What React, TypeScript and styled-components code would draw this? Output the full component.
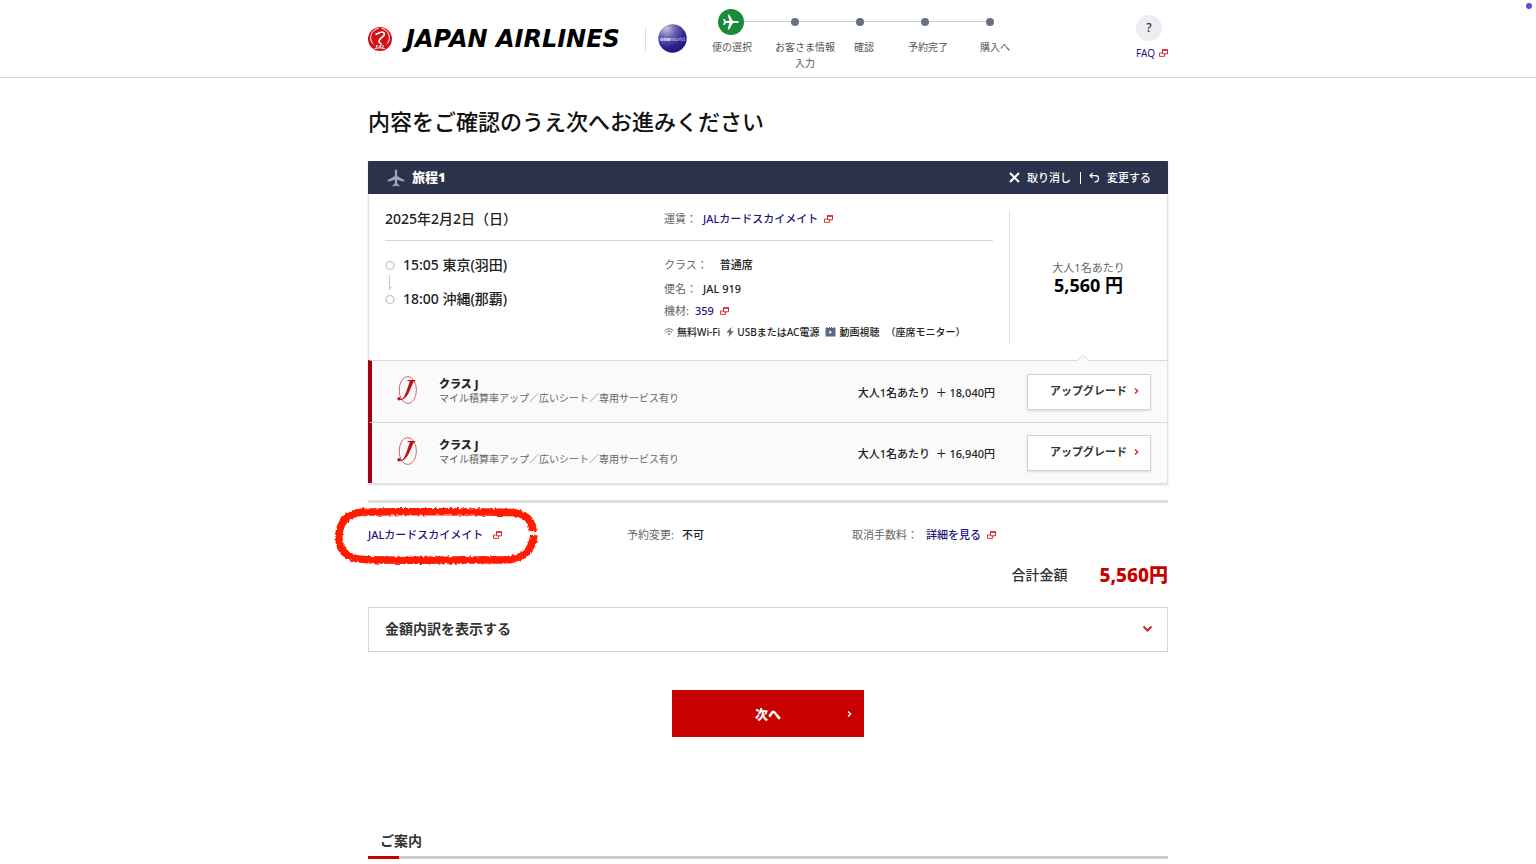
import React from "react";
import styled, { createGlobalStyle } from "styled-components";

const GlobalStyle = createGlobalStyle`
  *, *::before, *::after { box-sizing: border-box; }
  body {
    margin: 0;
    background: #fff;
    color: #222;
    font-family: "Noto Sans", "Noto Sans CJK JP", sans-serif;
    font-size: 11px;
    line-height: 20px;
  }
  h1, h2, h3, p, ol, ul, dl, dd { margin: 0; padding: 0; }
  ol { list-style: none; }
  button { font: inherit; color: inherit; cursor: pointer; padding: 0; border: 0; background: none; }
  a { color: #1e1580; text-decoration: none; }
  svg { display: block; flex: none; }
`;

const Wrap = styled.div`
  width: 100%;
  max-width: 800px;
  margin: 0 auto;
`;

const RecordingDot = styled.span`
  position: absolute;
  top: 3px;
  right: 4px;
  width: 6px;
  height: 6px;
  border-radius: 50%;
  background: #5a4be0;
`;

const Header = styled.header`
  border-bottom: 1px solid #d8d8d8;
`;

const HeaderInner = styled(Wrap)`
  display: flex;
  align-items: flex-start;
  height: 77px;
`;

const Brand = styled.a`
  display: flex;
  align-items: center;
  padding-top: 24px;
  color: #000;
`;

const BrandName = styled.span`
  width: 227px;
  margin: 0 12px 0 14px;
  font: italic 700 24px/28px "DejaVu Sans", sans-serif;
  white-space: nowrap;
`;

const BrandRule = styled.span`
  width: 1px;
  height: 24px;
  margin-right: 12px;
  background: #ddd;
`;

const Progress = styled.div`
  width: 320px;
  margin-left: 24px;
  padding-top: 8px;
`;

const StepTrack = styled.div`
  display: flex;
  align-items: center;
  padding-left: 7px;
  height: 27px;
`;

const StepLine = styled.span`
  width: 57px;
  height: 1px;
  background: #ccc;
  &:first-of-type { width: 47px; }
`;

const StepDot = styled.i`
  width: 8px;
  height: 8px;
  border-radius: 50%;
  background: #667085;
`;

const StepLabels = styled.ol`
  display: grid;
  grid-template-columns: 62px 80px 54px 72px 1fr;
  margin-top: 4px;
  padding-left: 1px;
  color: #555;
  font-size: 10px;
  line-height: 16px;
`;

const StepLabel = styled.li`
  justify-self: start;
  max-width: 62px;
  text-align: center;
`;

const Faq = styled.a`
  display: flex;
  flex-direction: column;
  align-items: center;
  margin-left: auto;
  padding-top: 15px;
  font-size: 10px;
  line-height: 16px;
`;

const FaqMark = styled.span`
  width: 26px;
  height: 26px;
  margin: 0 6px 4px 0;
  border-radius: 50%;
  background: #ecedf2;
  color: #2c3249;
  font-size: 12px;
  font-weight: 500;
  line-height: 26px;
  text-align: center;
`;

const IconText = styled.span<{ $gap?: number }>`
  display: inline-flex;
  align-items: center;
  gap: ${(p) => p.$gap ?? 6}px;
`;

const Title = styled.h1`
  margin: 27px 0 23px;
  color: #111;
  font-size: 22px;
  font-weight: 500;
  line-height: 33px;
`;

const Card = styled.section`
  border: 1px solid #dfe1e3;
  border-top: 0;
  box-shadow: 0 1px 2px rgba(0, 0, 0, 0.15);
`;

const CardHead = styled.div`
  display: flex;
  align-items: center;
  height: 33px;
  margin: 0 -1px;
  padding: 0 17px 0 19px;
  border-radius: 1px 1px 0 0;
  background: #2b324b;
  color: #fff;
`;

const CardTitle = styled.h2`
  margin: 0 0 2px 7px;
  font-size: 13px;
  font-weight: 900;
`;

const HeadActions = styled.div`
  display: flex;
  align-items: center;
  margin-left: auto;
  font-weight: 500;
  & > button + button {
    margin-left: 9px;
    padding-left: 8px;
  }
`;

const HeadButton = styled.button`
  display: flex;
  align-items: center;
  gap: 7px;
  line-height: 12px;
  & + & { border-left: 1px solid #fff; }
`;

const CardBody = styled.div`
  display: flex;
  min-height: 166px;
`;

const Itinerary = styled.div`
  flex: 1;
  margin: 0 16px;
`;

const InfoRow = styled.div`
  display: grid;
  grid-template-columns: 279px 1fr;
`;

const DateRow = styled(InfoRow)`
  padding: 15px 0 11px;
  border-bottom: 1px solid #d5d5d5;
`;

const FlightRow = styled(InfoRow)`
  padding-top: 12px;
`;

const DateText = styled.h3`
  color: #222;
  font-size: 14px;
  font-weight: 500;
`;

const Route = styled.div`
  display: grid;
  grid-template-columns: 10px 1fr;
  column-gap: 8px;
  color: #222;
  font-size: 14px;
  font-weight: 500;
  line-height: 24px;
`;

const RouteStops = styled.div`
  display: grid;
  row-gap: 10px;
  align-content: start;
`;

const Line = styled.p<{ $height?: number; $gap?: number }>`
  display: flex;
  align-items: center;
  gap: ${(p) => p.$gap ?? 6}px;
  line-height: ${(p) => p.$height ?? 20}px;
`;

const Label = styled.span`
  color: #666;
`;

const Value = styled.span`
  color: #222;
  font-weight: 500;
`;

const Link = styled.a`
  display: inline-flex;
  align-items: center;
  gap: 6px;
  font-weight: 500;
`;

const Amenities = styled.div`
  display: flex;
  align-items: center;
  gap: 6px;
  font-size: 10px;
  font-weight: 500;
  line-height: 22px;
  white-space: nowrap;
`;

const FareCell = styled.div`
  display: flex;
  flex-direction: column;
  justify-content: center;
  width: 158px;
  margin: 16px 0;
  border-left: 1px solid #e3e3e3;
  text-align: center;
  line-height: 16px;
`;

const FarePrice = styled.strong`
  color: #000;
  font-size: 18px;
  line-height: 18px;
`;

const Upgrade = styled.div`
  position: relative;
  display: flex;
  align-items: center;
  height: 62px;
  margin-left: -1px;
  padding: 0 16px 0 23px;
  border-top: 1px solid #d9d9d9;
  border-left: 4px solid #a50010;
  background: #fafafa;
  & + & { height: 61px; }
  & > svg:not([class]) { margin-bottom: 4px; }
`;

const Notch = styled.svg`
  position: absolute;
  top: -7px;
  right: 77px;
`;

const UpgradeText = styled.div`
  flex: 1;
  margin: 0 0 2px 20px;
  line-height: 15px;
`;

const UpgradeName = styled.h3`
  font-size: 11px;
  font-weight: 800;
`;

const UpgradeNote = styled.p`
  color: #666;
  font-size: 10px;
`;

const UpgradeFare = styled.p`
  margin: 2px 32px 0 0;
  color: #222;
  font-weight: 500;
  white-space: pre;
`;

const UpgradeButton = styled.button`
  display: flex;
  align-items: center;
  justify-content: flex-end;
  gap: 7px;
  width: 124px;
  height: 36px;
  padding: 0 11px 2px 0;
  border: 1px solid #d3d3d3;
  background: #fff;
  box-shadow: 0 1px 2px rgba(0, 0, 0, 0.12);
  color: #333;
  font-weight: 700;
`;

const Conditions = styled.section`
  display: grid;
  grid-template-columns: 259px 225px 1fr;
  align-items: center;
  margin-top: 16px;
  padding: 22px 0 20px;
  border-top: 3px solid #ddd;
`;

const FareName = styled.div`
  position: relative;
`;

const Marker = styled.svg`
  position: absolute;
  left: -38px;
  top: -24px;
  overflow: visible;
  pointer-events: none;
`;

const Total = styled.p`
  display: flex;
  align-items: center;
  justify-content: flex-end;
  gap: 32px;
  color: #333;
  font-size: 14px;
  font-weight: 500;
  line-height: 20px;
`;

const TotalPrice = styled.strong`
  color: #c80000;
  font-size: 19px;
  font-weight: 800;
`;

const Breakdown = styled.button`
  display: flex;
  align-items: center;
  justify-content: space-between;
  width: 100%;
  height: 45px;
  margin-top: 22px;
  padding: 0 14px 1px 16px;
  border: 1px solid #d5d5d5;
  background: #fff;
  color: #333;
  font-size: 14px;
  font-weight: 700;
`;

const NextButton = styled.button`
  display: grid;
  grid-template-columns: 1fr auto 1fr;
  align-items: center;
  width: 192px;
  height: 47px;
  margin: 38px auto 92px;
  padding: 0 12px;
  background: #c80000;
  color: #fff;
  font-size: 13px;
  font-weight: 900;
  & > span { grid-column: 2; }
  & > svg { justify-self: end; }
`;

const GuideTitle = styled.h2`
  padding: 0 12px 3px;
  color: #333;
  font-size: 14px;
  font-weight: 700;
  line-height: 24px;
`;

const GuideRule = styled.div`
  height: 3px;
  background: linear-gradient(to right, #c80000 31px, #ccc 31px);
`;

const External = () => (
  <svg width="9" height="8" viewBox="0 0 9 8" fill="none" stroke="#d7222b">
    <path d="M3.500 1H8.500V4.800H3.500Z" />
    <path d="M3 .9H9" strokeWidth="1.400" />
    <path d="M3.200 4H.5V7.400H5.600V5" strokeWidth=".9" />
  </svg>
);

const Chevron = ({ color }: { color: string }) => (
  <svg width="5" height="8" viewBox="0 0 5 8" fill="none" stroke={color} strokeWidth="1.400">
    <path d="M1 1.500L3.600 4L1 6.500" />
  </svg>
);

const planePath =
  "M12 1.5c-.9 0-1.4.9-1.4 2v6L2 14.4v2.1l8.6-2.3v4.6l-2.7 2v1.7l4.1-1.1 4.1 1.1v-1.7l-2.7-2v-4.6l8.6 2.3v-2.1l-8.6-4.9v-6c0-1.100-.5-2-1.400-2z";

const CraneMark = () => (
  <svg width="24" height="24" viewBox="0 0 24 24">
    <circle cx="12" cy="12" r="12" fill="#d0121b" />
    <path
      d="M10.500 1.500C5 2.200 2 7 2.800 12.500C3.200 14.500 4.200 16 5.500 17M13.500 1.500C19 2.200 22 7 21.200 12.500C20.800 14.500 19.800 16 18.500 17"
      fill="none"
      stroke="#fff"
      strokeWidth="1"
    />
    <path
      d="M8.200 7.200C10.500 6.800 12 5 14 5c2.200 0 3 1.800 1.800 3.500-1.600 2.300-4.800 3-4.800 5.800 0 1.300.8 2.200 2.200 2.700"
      fill="none"
      stroke="#fff"
      strokeWidth="1.700"
      strokeLinecap="round"
    />
    <text x="12" y="21.500" textAnchor="middle" fill="#fff" fontFamily="Liberation Sans" fontSize="6" fontStyle="italic" fontWeight="700">
      JAL
    </text>
  </svg>
);

const Oneworld = () => (
  <svg width="29" height="29" viewBox="0 0 29 29">
    <defs>
      <radialGradient id="globe" cx=".28" cy=".15" r=".95">
        <stop offset="0" stopColor="#c4c1e4" />
        <stop offset=".35" stopColor="#6962b2" />
        <stop offset=".7" stopColor="#2d2391" />
        <stop offset="1" stopColor="#1c1178" />
      </radialGradient>
    </defs>
    <circle cx="14.500" cy="14.500" r="14.200" fill="url(#globe)" />
    <text x="14.500" y="16.500" textAnchor="middle" fill="#fff" fontFamily="Liberation Sans" fontSize="6">
      <tspan fontWeight="700">one</tspan>
      <tspan fillOpacity=".7">world</tspan>
    </text>
  </svg>
);

const ClassJ = () => (
  <svg width="24" height="32" viewBox="0 0 24 32">
    <ellipse cx="12.800" cy="16" rx="8.600" ry="13.500" fill="none" stroke="#d4525c" strokeWidth=".9" />
    <path
      d="M12.500 6.500h7.800M18.600 6.500c-1.500 1-2.700 4.800-4.400 9.200-2.200 5.800-4.500 9.800-9.700 10"
      fill="none"
      stroke="#c0101c"
      strokeWidth="1"
    />
    <path d="M15 6.800h4.200C17 10.500 15.800 15 13.300 19.500 11.700 22.500 9.800 24.600 7.300 25.500 10.500 21.500 13 12.500 15 6.800z" fill="#c0101c" />
    <circle cx="4" cy="24.800" r="1.700" fill="#c0101c" />
  </svg>
);

const steps = ["便の選択", "お客さま情報入力", "確認", "予約完了", "購入へ"];
const upgrades = ["18,040円", "16,940円"];

export default function App() {
  return (
    <>
      <GlobalStyle />
      <RecordingDot />
      <Header>
        <HeaderInner>
          <Brand href="#">
            <CraneMark />
            <BrandName>JAPAN AIRLINES</BrandName>
            <BrandRule />
            <Oneworld />
          </Brand>
          <Progress>
            <StepTrack>
              <svg width="26" height="26" viewBox="0 0 26 26">
                <circle cx="13" cy="13" r="13" fill="#1a8a3c" />
                <g transform="translate(13 13) rotate(90) scale(.74) translate(-12 -12)">
                  <path d={planePath} fill="#fff" />
                </g>
              </svg>
              {steps.slice(1).map((step) => (
                <React.Fragment key={step}>
                  <StepLine />
                  <StepDot />
                </React.Fragment>
              ))}
            </StepTrack>
            <StepLabels>
              {steps.map((step) => (
                <StepLabel key={step}>{step}</StepLabel>
              ))}
            </StepLabels>
          </Progress>
          <Faq href="#">
            <FaqMark>?</FaqMark>
            <IconText $gap={4}>
              FAQ <External />
            </IconText>
          </Faq>
        </HeaderInner>
      </Header>

      <Wrap as="main">
        <Title>内容をご確認のうえ次へお進みください</Title>
        <Card>
          <CardHead>
            <svg width="18" height="18" viewBox="1 1 22 22">
              <path d={planePath} fill="#a3a7b4" />
            </svg>
            <CardTitle>旅程1</CardTitle>
            <HeadActions>
              <HeadButton type="button">
                <svg width="11" height="11" viewBox="0 0 11 11" stroke="#fff" strokeWidth="2">
                  <path d="M1 1L10 10M10 1L1 10" />
                </svg>
                取り消し
              </HeadButton>
              <HeadButton type="button">
                <svg width="11" height="11" viewBox="0 0 11 11" fill="none" stroke="#fff" strokeWidth="1.200">
                  <path d="M3.600 1L1 3.600L3.600 6.200M1 3.600H6.800C10.500 3.800 10.500 9.500 6.500 9.800H5.500" />
                </svg>
                変更する
              </HeadButton>
            </HeadActions>
          </CardHead>

          <CardBody>
            <Itinerary>
              <DateRow>
                <DateText>2025年2月2日（日）</DateText>
                <Line>
                  <Label>運賃：</Label>
                  <Link href="#">
                    JALカードスカイメイト <External />
                  </Link>
                </Line>
              </DateRow>
              <FlightRow>
                <Route>
                  <svg width="10" height="58" viewBox="0 0 10 58" fill="none" stroke="#ccc">
                    <circle cx="5" cy="12.500" r="4" strokeWidth="1.500" />
                    <path d="M4.500 22V36L6.500 34" strokeWidth="1.200" />
                    <circle cx="5" cy="46.500" r="4" strokeWidth="1.500" />
                  </svg>
                  <RouteStops>
                    <p>15:05 東京(羽田)</p>
                    <p>18:00 沖縄(那覇)</p>
                  </RouteStops>
                </Route>
                <div>
                  <Line $height={24} $gap={12}>
                    <Label>クラス：</Label>
                    <Value>普通席</Value>
                  </Line>
                  <Line $height={24}>
                    <Label>便名：</Label>
                    <Value>JAL 919</Value>
                  </Line>
                  <Line>
                    <Label>機材:</Label>
                    <Link href="#">
                      359 <External />
                    </Link>
                  </Line>
                  <Amenities>
                    <IconText $gap={3}>
                      <svg width="10" height="8" viewBox="0 0 10 8" fill="none" stroke="#5c6780" strokeWidth="1">
                        <path d="M.5 2.800C3 .2 7 .2 9.500 2.800M2 4.400C3.800 2.700 6.200 2.700 8 4.400" />
                        <path d="M3.500 5.500H6.500L5 7.400Z" fill="#5c6780" stroke="none" />
                      </svg>
                      無料Wi-Fi
                    </IconText>
                    <IconText $gap={3}>
                      <svg width="8" height="10" viewBox="0 0 8 10">
                        <path d="M5.500 0L.3 5.600H3.300L2.500 10L7.700 4.300H4.700Z" fill="#5c6780" />
                      </svg>
                      USBまたはAC電源
                    </IconText>
                    <IconText $gap={3}>
                      <svg width="11" height="10" viewBox="0 0 11 10">
                        <path d="M.5 1H1.500V0H2.500V1H4V0H5V1H6V0H7V1H8.500V0H9.500V1H10.500V9.500H.5Z" fill="#5c6780" />
                        <path d="M4.400 3.400L7 5.200L4.400 7Z" fill="#fff" />
                      </svg>
                      動画視聴
                    </IconText>
                    <span>（座席モニター）</span>
                  </Amenities>
                </div>
              </FlightRow>
            </Itinerary>
            <FareCell>
              <Label>大人1名あたり</Label>
              <FarePrice>5,560 円</FarePrice>
            </FareCell>
          </CardBody>

          {upgrades.map((price, index) => (
            <Upgrade key={price}>
              {index === 0 && (
                <Notch width="14" height="8" viewBox="0 0 14 8" fill="#f7f8f9" stroke="#ddd">
                  <path d="M0 7.500L7 1L14 7.500" />
                </Notch>
              )}
              <ClassJ />
              <UpgradeText>
                <UpgradeName>クラス J</UpgradeName>
                <UpgradeNote>マイル積算率アップ／広いシート／専用サービス有り</UpgradeNote>
              </UpgradeText>
              <UpgradeFare>大人1名あたり  ＋ {price}</UpgradeFare>
              <UpgradeButton type="button">
                アップグレード <Chevron color="#d7222b" />
              </UpgradeButton>
            </Upgrade>
          ))}
        </Card>

        <Conditions>
          <FareName>
            <Link href="#">
              <IconText $gap={10}>
                JALカードスカイメイト <External />
              </IconText>
            </Link>
            <Marker width="212" height="66" viewBox="0 0 212 66">
              <defs>
                <filter id="chalk" x="-5%" y="-10%" width="110%" height="120%">
                  <feTurbulence type="fractalNoise" baseFrequency=".4" numOctaves="1" seed="4" />
                  <feDisplacementMap in="SourceGraphic" scale="4" xChannelSelector="R" yChannelSelector="G" />
                </filter>
              </defs>
              <path
                d="M203 30C202 17 194 12 180 11.500C140 10 70 11 36 11C18 11 10 20 9 34C8 50 18 58 34 58.500C80 60 140 58.500 172 59C192 59 202 51 204 34"
                fill="none"
                stroke="#ff1e00"
                strokeWidth="7.500"
                filter="url(#chalk)"
              />
            </Marker>
          </FareName>
          <Line $gap={8}>
            <Label>予約変更:</Label>
            <Value>不可</Value>
          </Line>
          <Line $gap={8}>
            <Label>取消手数料：</Label>
            <Link href="#">
              詳細を見る <External />
            </Link>
          </Line>
        </Conditions>

        <Total>
          合計金額 <TotalPrice>5,560円</TotalPrice>
        </Total>

        <Breakdown type="button">
          金額内訳を表示する
          <svg width="11" height="8" viewBox="0 0 11 8" fill="none" stroke="#d7222b" strokeWidth="2">
            <path d="M1.500 1.500L5.500 5.500L9.500 1.500" />
          </svg>
        </Breakdown>

        <NextButton type="button">
          <span>次へ</span>
          <Chevron color="#fff" />
        </NextButton>

        <GuideTitle>ご案内</GuideTitle>
        <GuideRule />
      </Wrap>
    </>
  );
}
